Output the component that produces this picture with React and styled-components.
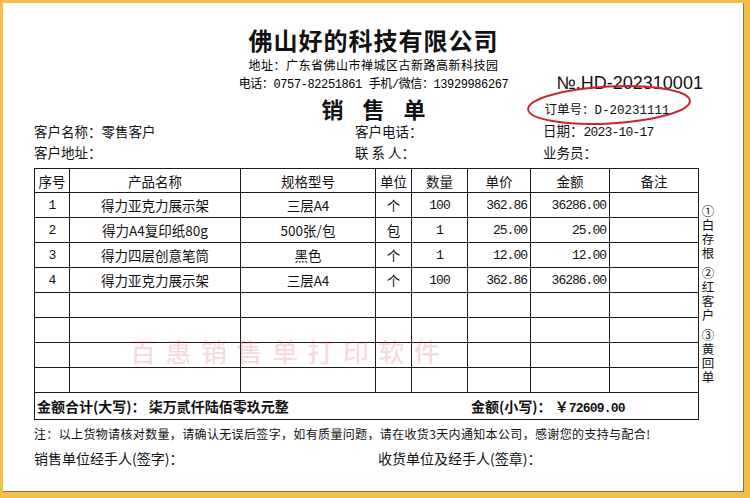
import React from "react";
import styled, { createGlobalStyle } from "styled-components";

const CJK = `"Noto Sans CJK SC", sans-serif`;
const MONO = `"Liberation Mono", "Noto Sans CJK SC", monospace`;

const GlobalStyle = createGlobalStyle`
  html, body {
    margin: 0;
    padding: 0;
    background: #fff;
  }
  body {
    font-family: ${CJK};
    color: #111;
  }
`;

const Frame = styled.div`
  width: 750px;
  height: 498px;
  box-sizing: border-box;
  border: 3px solid #f0c146;
  border-right-width: 6px;
  border-bottom-width: 6px;
  box-shadow: inset -1px -1px 0 #857645;
  background: #fff;
  padding-top: 22px;
  overflow: hidden;
`;

const Company = styled.h1`
  margin: 0;
  text-align: center;
  font: 700 24px/30px ${CJK};
  letter-spacing: 1px;
  color: #111;
`;

const Address = styled.div`
  text-align: center;
  font: 12px/20px ${CJK};
  letter-spacing: 0.5px;
  color: #000;
`;

const HeadRow = styled.div`
  display: grid;
  grid-template-columns: 1fr 270px 1fr;
  align-items: center;
  height: ${(p) => p.$h}px;
`;

const Phone = styled.div`
  text-align: center;
  font: 12px/20px ${MONO};
  letter-spacing: -0.4px;
  color: #000;
  white-space: nowrap;
`;

const SerialNo = styled.div`
  margin-left: 48px;
  margin-top: -4px;
  font: 18px/20px "Liberation Sans", ${CJK};
  white-space: nowrap;
`;

const DocTitle = styled.div`
  text-align: center;
  font: 700 22px/26px ${CJK};
  letter-spacing: 19px;
  padding-left: 19px;
`;

const OrderNo = styled.div`
  position: relative;
  justify-self: start;
  margin-left: 36px;
  margin-top: 6px;
  font: 12.5px/18px ${MONO};
  white-space: nowrap;
`;

const Ring = styled.svg`
  position: absolute;
  left: -20px;
  top: -20px;
  width: 168px;
  height: 46px;
  overflow: visible;
  pointer-events: none;
`;

const Body = styled.div`
  display: flex;
  margin-left: 31px;
`;

const Sheet = styled.div`
  width: 664px;
  flex: none;
`;

const InfoGrid = styled.div`
  display: grid;
  grid-template-columns: 321px 188px 1fr;
  grid-auto-rows: 21px;
  align-items: center;
  font: 13.5px/21px ${CJK};
  margin-bottom: 5px;
  white-space: nowrap;
`;

const Mono = styled.span`
  font-family: ${MONO};
  font-size: 13px;
  letter-spacing: -0.8px;
`;

const TableWrap = styled.div`
  position: relative;
`;

const Table = styled.table`
  width: 664px;
  border-collapse: collapse;
  table-layout: fixed;
  font: 13.5px ${CJK};
`;

const Col = styled.col`
  width: ${(p) => p.$w}px;
`;

const Th = styled.th`
  height: 23px;
  padding: 0;
  border: 1px solid #1c1c1c;
  font-weight: 400;
  text-align: center;
`;

const Td = styled.td`
  height: 24px;
  padding: 0 ${(p) => (p.$align === "right" ? "3px" : "0")};
  border: 1px solid #1c1c1c;
  text-align: ${(p) => p.$align || "center"};
  font-family: ${(p) => (p.$num ? MONO : CJK)};
  font-size: ${(p) => (p.$num ? "13px" : "13.5px")};
  letter-spacing: ${(p) => (p.$num ? "-1px" : "0")};
  white-space: nowrap;
  overflow: hidden;
`;

const TotalCell = styled.td`
  height: 26px;
  padding: 0;
  border: 1px solid #1c1c1c;
`;

const TotalLine = styled.div`
  display: grid;
  grid-template-columns: 434px 1fr;
  align-items: center;
  padding-left: 2px;
  font: 700 14px ${CJK};
  white-space: nowrap;
`;

const Watermark = styled.div`
  position: absolute;
  left: 96px;
  top: 166px;
  font: 500 26px/34px ${CJK};
  letter-spacing: 9.5px;
  color: rgba(226, 60, 72, 0.2);
  pointer-events: none;
  white-space: nowrap;
`;

const Note = styled.div`
  margin-top: 4px;
  font: 12px/20px ${CJK};
  letter-spacing: 0.35px;
  white-space: nowrap;
`;

const Signs = styled.div`
  display: grid;
  grid-template-columns: 344px 1fr;
  margin-top: 3px;
  font: 14px/22px ${CJK};
  white-space: nowrap;
`;

const SideNotes = styled.div`
  display: flex;
  flex-direction: column;
  gap: 6px;
  width: 16px;
  margin-left: 2px;
  padding-top: 83px;
`;

const SideNote = styled.div`
  display: flex;
  flex-direction: column;
  align-items: center;
  font: 12.5px/14px ${CJK};
`;

const columns = [
  { title: "序号", w: 35 },
  { title: "产品名称", w: 171 },
  { title: "规格型号", w: 135 },
  { title: "单位", w: 36 },
  { title: "数量", w: 56 },
  { title: "单价", w: 63 },
  { title: "金额", w: 79 },
  { title: "备注", w: 89 },
];

const items = [
  { no: 1, name: "得力亚克力展示架", spec: "三层A4", unit: "个", qty: "100", price: "362.86", amount: "36286.00" },
  { no: 2, name: "得力A4复印纸80g", spec: "500张/包", unit: "包", qty: "1", price: "25.00", amount: "25.00" },
  { no: 3, name: "得力四层创意笔筒", spec: "黑色", unit: "个", qty: "1", price: "12.00", amount: "12.00" },
  { no: 4, name: "得力亚克力展示架", spec: "三层A4", unit: "个", qty: "100", price: "362.86", amount: "36286.00" },
];

const emptyRows = [0, 1, 2, 3];

const copies = ["①白存根", "②红客户", "③黄回单"];

const App = () => {
  return (
    <>
      <GlobalStyle />
      <Frame>
        <Company>佛山好的科技有限公司</Company>
        <Address>地址：广东省佛山市禅城区古新路高新科技园</Address>
        <HeadRow $h={20}>
          <span />
          <Phone>电话：0757-82251861 手机/微信：13929986267</Phone>
          <SerialNo>№.HD-202310001</SerialNo>
        </HeadRow>
        <HeadRow $h={26}>
          <span />
          <DocTitle>销售单</DocTitle>
          <OrderNo>
            订单号：D-20231111
            <Ring viewBox="0 0 168 46">
              <ellipse
                cx="84"
                cy="23"
                rx="81"
                ry="18.5"
                fill="none"
                stroke="#c8262e"
                strokeWidth="2"
                transform="rotate(-3 84 23)"
              />
            </Ring>
          </OrderNo>
        </HeadRow>
        <Body>
          <Sheet>
            <InfoGrid>
              <span>客户名称：零售客户</span>
              <span>客户电话：</span>
              <span>
                日期：<Mono>2023-10-17</Mono>
              </span>
              <span>客户地址：</span>
              <span>联 系 人：</span>
              <span>业务员：</span>
            </InfoGrid>
            <TableWrap>
              <Table>
                <colgroup>
                  {columns.map((c) => (
                    <Col key={c.title} $w={c.w} />
                  ))}
                </colgroup>
                <thead>
                  <tr>
                    {columns.map((c) => (
                      <Th key={c.title}>{c.title}</Th>
                    ))}
                  </tr>
                </thead>
                <tbody>
                  {items.map((it) => (
                    <tr key={it.no}>
                      <Td $num>{it.no}</Td>
                      <Td>{it.name}</Td>
                      <Td>{it.spec}</Td>
                      <Td>{it.unit}</Td>
                      <Td $num>{it.qty}</Td>
                      <Td $num $align="right">{it.price}</Td>
                      <Td $num $align="right">{it.amount}</Td>
                      <Td />
                    </tr>
                  ))}
                  {emptyRows.map((r) => (
                    <tr key={"e" + r}>
                      {columns.map((c) => (
                        <Td key={c.title} />
                      ))}
                    </tr>
                  ))}
                  <tr>
                    <TotalCell colSpan={8}>
                      <TotalLine>
                        <span>金额合计(大写)： 柒万贰仟陆佰零玖元整</span>
                        <span>
                          金额(小写)： ￥<Mono>72609.00</Mono>
                        </span>
                      </TotalLine>
                    </TotalCell>
                  </tr>
                </tbody>
              </Table>
              <Watermark>百惠销售单打印软件</Watermark>
            </TableWrap>
            <Note>
              注：以上货物请核对数量，请确认无误后签字，如有质量问题，请在收货3天内通知本公司，感谢您的支持与配合!
            </Note>
            <Signs>
              <span>销售单位经手人(签字)：</span>
              <span>收货单位及经手人(签章)：</span>
            </Signs>
          </Sheet>
          <SideNotes>
            {copies.map((c) => (
              <SideNote key={c}>
                {[...c].map((ch, i) => (
                  <span key={i}>{ch}</span>
                ))}
              </SideNote>
            ))}
          </SideNotes>
        </Body>
      </Frame>
    </>
  );
};

export default App;
